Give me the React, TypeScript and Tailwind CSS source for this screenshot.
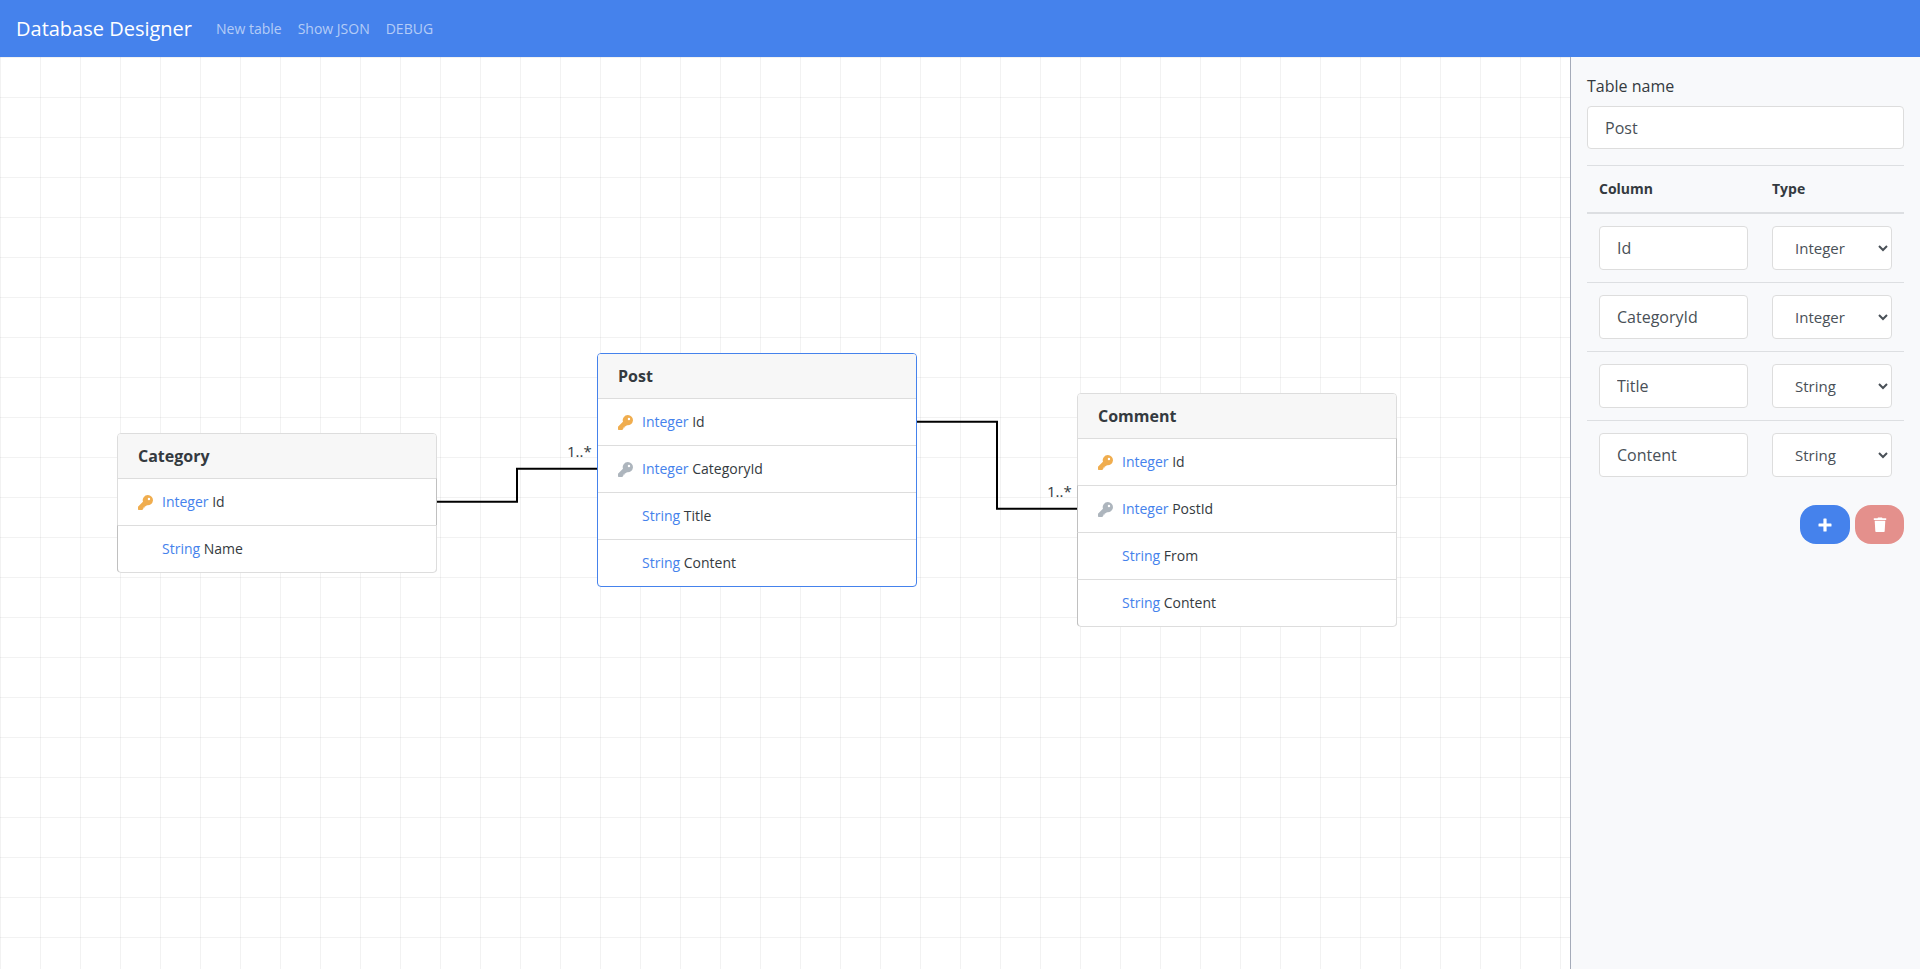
import React from "react";

type Field = { type: "Integer" | "String"; name: string; key?: "primary" | "foreign" };
type Entity = { name: string; x: number; y: number; selected?: boolean; fields: Field[] };

const entities: Entity[] = [
  {
    name: "Category",
    x: 117,
    y: 376,
    fields: [
      { type: "Integer", name: "Id", key: "primary" },
      { type: "String", name: "Name" },
    ],
  },
  {
    name: "Post",
    x: 597,
    y: 296,
    selected: true,
    fields: [
      { type: "Integer", name: "Id", key: "primary" },
      { type: "Integer", name: "CategoryId", key: "foreign" },
      { type: "String", name: "Title" },
      { type: "String", name: "Content" },
    ],
  },
  {
    name: "Comment",
    x: 1077,
    y: 336,
    fields: [
      { type: "Integer", name: "Id", key: "primary" },
      { type: "Integer", name: "PostId", key: "foreign" },
      { type: "String", name: "From" },
      { type: "String", name: "Content" },
    ],
  },
];

function KeyIcon({ className }: { className: string }) {
  return (
    <svg viewBox="0 0 16 16" className={className} fill="currentColor" fillRule="evenodd" aria-hidden="true">
      <path d="M10.5 0a5.5 5.5 0 1 1-1.1 10.9l-1 1.1H7.2v1.2H5.8v1.3L4.6 16H.7a.7.7 0 0 1-.7-.7v-2.5c0-.2.1-.4.2-.5l5.1-5.1A5.5 5.5 0 0 1 10.500 0ZM11.700 2.900a1.300 1.300 0 1 0 0 2.600a1.300 1.300 0 1 0 0-2.600Z" />
    </svg>
  );
}

function PlusIcon() {
  return (
    <svg viewBox="0 0 14 14" className="size-3.5" fill="currentColor" aria-hidden="true">
      <path d="M6 .5h2a.6.6 0 0 1 .6.6v4.300h4.300a.6.6 0 0 1 .6.6v2a.6.6 0 0 1-.6.6H8.600v4.300a.6.6 0 0 1-.6.6H6a.6.6 0 0 1-.6-.6V8.600H1.100a.6.6 0 0 1-.6-.6V6a.6.6 0 0 1 .6-.6h4.300V1.100A.6.6 0 0 1 6 .5z" />
    </svg>
  );
}

function EntityNode({ entity }: { entity: Entity }) {
  return (
    <section
      className={
        "absolute w-80 rounded border bg-white " + (entity.selected ? "border-[#4582ec]" : "border-[#dddddd]")
      }
      style={{ left: entity.x, top: entity.y }}
    >
      <h2 className="flex h-11 items-center rounded-t-[3px] bg-[#f7f7f7] px-5 text-base font-bold">{entity.name}</h2>
      <ul>
        {entity.fields.map((f) => (
          <li
            key={f.name}
            className={
              "flex h-[47px] items-center gap-2 border-t border-t-[#dddddd] text-sm " +
              (entity.selected
                ? "px-5"
                : "-mx-px border-x border-x-[#dddddd] px-5 first:border-r-[#c0c0c0] not-first:border-l-[#c0c0c0] last:rounded-b-[3px]")
            }
          >
            <span className="w-4">
              {f.key && (
                <KeyIcon
                  className={f.key === "primary" ? "size-[15px] text-[#f0ad4e]" : "size-[15px] text-[#adb5bd]"}
                />
              )}
            </span>
            <span>
              <span className="text-[#4582ec]">{f.type}</span> {f.name}
            </span>
          </li>
        ))}
      </ul>
    </section>
  );
}

function TrashIcon() {
  return (
    <svg viewBox="0 0 14 16" className="h-4 w-3.5" fill="currentColor" aria-hidden="true">
      <path d="M.8 1.200h3.700L5 .5h4l.5.7h3.700v1.900H.8z" />
      <path d="M1.700 3.700h10.600l-.6 10.200a1.300 1.300 0 0 1-1.300 1.200H3.600a1.300 1.300 0 0 1-1.300-1.200z" />
    </svg>
  );
}

export default function App() {
  const selected = entities[1];
  return (
    <div className="flex min-h-screen flex-col bg-white font-['Open_Sans',sans-serif] text-[#343a40]">
      <nav className="flex h-[57px] shrink-0 items-center gap-4 bg-[#4582ec] px-4 text-sm text-white/60">
        <a href="#home" className="mr-2 text-xl text-white">
          Database Designer
        </a>
        <a href="#new">New table</a>
        <a href="#json">Show JSON</a>
        <a href="#debug">DEBUG</a>
      </nav>
      <div className="flex grow">
        <main className="relative grow overflow-hidden bg-[linear-gradient(to_right,#0000000d_1px,transparent_1px),linear-gradient(to_bottom,#0000000d_1px,transparent_1px)] bg-size-[40px_40px]">
          <svg className="absolute inset-0 size-full" fill="none" stroke="black" strokeWidth="2" aria-hidden="true">
            <path d="M437 444.8H517V411.8H597" />
            <path d="M917 364.8H997V451.8H1077" />
          </svg>
          <span className="absolute top-[383px] left-[567px] text-[15px]">1..*</span>
          <span className="absolute top-[423px] left-[1047px] text-[15px]">1..*</span>
          {entities.map((e) => (
            <EntityNode key={e.name} entity={e} />
          ))}
        </main>
        <aside className="w-[350px] shrink-0 border-l border-[#a5abb9] bg-[#f8f9fb] p-4">
          <label htmlFor="table-name" className="mb-1.5 block text-base leading-[27px]">
            Table name
          </label>
          <input
            id="table-name"
            defaultValue={selected.name}
            className="block h-[43px] w-full rounded border border-[#dddddd] bg-white px-[17px] text-base text-[#495057]"
          />
          <table className="mt-4 w-full table-fixed border-separate border-spacing-0">
            <thead>
              <tr className="text-left text-sm">
                <th className="h-[49px] border-t border-b-2 border-[#dddfe2] px-3">Column</th>
                <th className="h-[49px] w-36 border-t border-b-2 border-[#dddfe2] px-3">Type</th>
              </tr>
            </thead>
            <tbody>
              {selected.fields.map((f) => (
                <tr key={f.name} className="group">
                  <td className="border-t border-[#dddfe2] p-3 group-first:border-t-0">
                    <input
                      aria-label="Column name"
                      defaultValue={f.name}
                      className="block h-11 w-full rounded border border-[#dddddd] bg-white px-[17px] text-base text-[#495057]"
                    />
                  </td>
                  <td className="border-t border-[#dddfe2] p-3 group-first:border-t-0">
                    <select
                      aria-label="Column type"
                      defaultValue={f.type}
                      className="block h-11 w-full rounded border border-[#dddddd] bg-white pl-[18px] text-[15px] text-[#495057]"
                    >
                      <option>Integer</option>
                      <option>String</option>
                    </select>
                  </td>
                </tr>
              ))}
            </tbody>
          </table>
          <div className="mt-4 flex justify-end gap-[5px]">
            <button
              aria-label="Add column"
              className="flex h-[39px] w-[50px] items-center justify-center rounded-2xl bg-[#4582ec] text-white"
            >
              <PlusIcon />
            </button>
            <button
              aria-label="Delete table"
              className="flex h-[39px] w-[49px] items-center justify-center rounded-2xl bg-[#e4908c] text-white"
            >
              <TrashIcon />
            </button>
          </div>
        </aside>
      </div>
    </div>
  );
}
